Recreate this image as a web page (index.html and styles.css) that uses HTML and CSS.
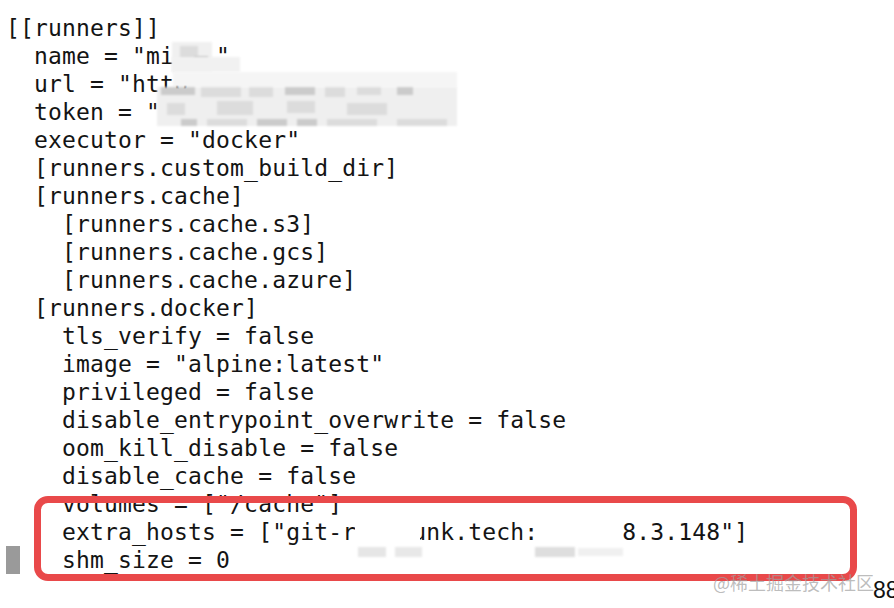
FILE: index.html
```html
<!DOCTYPE html>
<html>
<head>
<meta charset="utf-8">
<link rel="stylesheet" href="styles.css">
</head>
<body>
<div class="term">
<div class="line">[[runners]]</div>
<div class="line">  name = "mi   "</div>
<div class="line">  url = "http</div>
<div class="line">  token = "</div>
<div class="line">  executor = "docker"</div>
<div class="line">  [runners.custom_build_dir]</div>
<div class="line">  [runners.cache]</div>
<div class="line">    [runners.cache.s3]</div>
<div class="line">    [runners.cache.gcs]</div>
<div class="line">    [runners.cache.azure]</div>
<div class="line">  [runners.docker]</div>
<div class="line">    tls_verify = false</div>
<div class="line">    image = "alpine:latest"</div>
<div class="line">    privileged = false</div>
<div class="line">    disable_entrypoint_overwrite = false</div>
<div class="line">    oom_kill_disable = false</div>
<div class="line">    disable_cache = false</div>
<div class="line">    volumes = ["/cache"]</div>
<div class="line">    extra_hosts = ["git-r    unk.tech:      8.3.148"]</div>
<div class="line"><span class="cursor"> </span>   shm_size = 0</div>

<div class="mosaic mos-name">
  <i class="blk" style="left:8px;top:4px;width:18px;height:14px"></i>
  <i class="blk dk" style="left:22px;top:14px;width:14px;height:12px"></i>
</div>
<div class="mosaic mos-name2"></div>
<div class="mosaic mos-urltop"></div>
<div class="mosaic mos-url">
  <i class="blk dk" style="left:4px;top:0px;width:34px;height:8px"></i>
  <i class="blk" style="left:44px;top:0px;width:40px;height:10px"></i>
  <i class="blk" style="left:92px;top:0px;width:24px;height:10px"></i>
  <i class="blk dk" style="left:128px;top:0px;width:30px;height:8px"></i>
  <i class="blk" style="left:168px;top:0px;width:20px;height:10px"></i>
  <i class="blk" style="left:200px;top:0px;width:24px;height:8px"></i>
  <i class="blk dk" style="left:240px;top:0px;width:16px;height:8px"></i>
  <i class="blk" style="left:10px;top:16px;width:18px;height:12px"></i>
  <i class="blk" style="left:60px;top:14px;width:36px;height:14px"></i>
  <i class="blk" style="left:130px;top:14px;width:28px;height:12px"></i>
  <i class="blk" style="left:190px;top:16px;width:40px;height:12px"></i>
  <i class="blk dk" style="left:24px;top:32px;width:16px;height:7px"></i>
  <i class="blk" style="left:50px;top:32px;width:40px;height:7px"></i>
  <i class="blk dk" style="left:100px;top:32px;width:30px;height:7px"></i>
  <i class="blk dk" style="left:140px;top:32px;width:20px;height:7px"></i>
  <i class="blk" style="left:170px;top:32px;width:50px;height:7px"></i>
  <i class="blk" style="left:240px;top:32px;width:50px;height:7px"></i>
</div>
<div class="hide hide-host1"></div>
<div class="mosaic mos-host1"></div>
<div class="mosaic mos-host1b"></div>
<div class="mosaic mos-host2"></div>
<div class="mosaic mos-host2b"></div>

<div class="redbox"></div>
<div class="watermark">@稀土掘金技术社区</div>
<div class="pageno">88</div>
</div>
</body>
</html>
```

FILE: styles.css
```css
html, body {
  margin: 0;
  padding: 0;
  background: #ffffff;
}
body {
  width: 894px;
  height: 608px;
  overflow: hidden;
}
.term {
  position: relative;
  width: 894px;
  height: 608px;
  padding: 14px 0 0 6px;
  box-sizing: border-box;
  font-family: "DejaVu Sans Mono", "Liberation Mono", monospace;
  font-size: 23px;
  letter-spacing: 0.16px;
  color: #141414;
}
.line {
  height: 28px;
  line-height: 28px;
  white-space: pre;
}
.cursor {
  display: inline-block;
  width: 14px;
  height: 28px;
  vertical-align: top;
  background: #9a9a9a;
}
.hide {
  position: absolute;
  background: #ffffff;
}
.hide-host1 {
  left: 355px;
  top: 516px;
  width: 65px;
  height: 30px;
}
.mosaic {
  position: absolute;
  background: #efefef;
  filter: blur(1.2px);
}
.mosaic .blk {
  position: absolute;
  background: #dcdcdc;
}
.mosaic .blk.dk {
  background: #cbcbcb;
}
.mos-name {
  left: 172px;
  top: 42px;
  width: 40px;
  height: 30px;
  background: #f0f0f0;
}
.mos-name2 {
  left: 172px;
  top: 57px;
  width: 68px;
  height: 15px;
  background: #f1f1f1;
}
.mos-urltop {
  left: 173px;
  top: 72px;
  width: 284px;
  height: 15px;
  background: #f5f5f5;
}
.mos-url {
  left: 157px;
  top: 87px;
  width: 300px;
  height: 39px;
}
.mos-host1 {
  left: 358px;
  top: 547px;
  width: 28px;
  height: 10px;
  background: #e6e6e6;
}
.mos-host1b {
  left: 395px;
  top: 547px;
  width: 27px;
  height: 10px;
  background: #e8e8e8;
}
.mos-host2 {
  left: 535px;
  top: 547px;
  width: 40px;
  height: 10px;
  background: #dedede;
}
.mos-host2b {
  left: 578px;
  top: 548px;
  width: 45px;
  height: 8px;
  background: #f0f0f0;
}
.redbox {
  position: absolute;
  left: 34px;
  top: 496px;
  width: 823px;
  height: 85px;
  box-sizing: border-box;
  border: 7px solid #e9494a;
  border-radius: 14px;
}
.watermark {
  position: absolute;
  left: 713px;
  top: 570px;
  font-family: "Noto Sans CJK SC", sans-serif;
  font-size: 18px;
  line-height: 24px;
  letter-spacing: 0;
  color: rgba(160, 160, 160, 0.7);
}
.pageno {
  position: absolute;
  left: 873px;
  top: 576px;
  font-family: "Liberation Sans", sans-serif;
  font-size: 23px;
  line-height: 28px;
  letter-spacing: 0;
  color: #111;
}
```
